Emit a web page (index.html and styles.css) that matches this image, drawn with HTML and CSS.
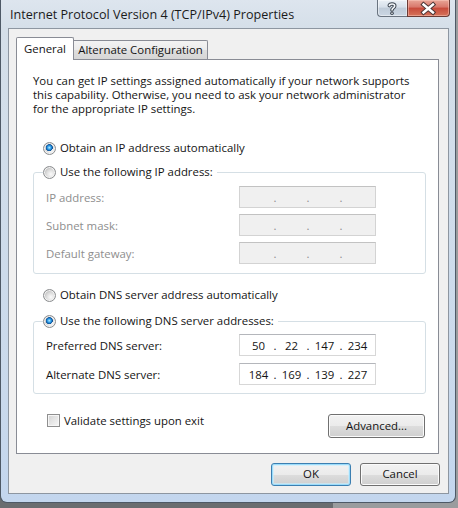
FILE: index.html
```html
<!DOCTYPE html>
<html>
<head>
<meta charset="utf-8">
<title>Internet Protocol Version 4 (TCP/IPv4) Properties</title>
<link rel="stylesheet" href="styles.css">
</head>
<body>
<div class="window">
  <div class="titlebar">
    <span class="title">Internet Protocol Version 4 (TCP/IPv4) Properties</span>
    <div class="caption">
      <div class="cap help">
        <svg width="30" height="17" viewBox="0 0 30 17">
          <g fill="none" stroke-linecap="round" stroke-linejoin="round">
            <path d="M12.3 5.6 C12.3 3.6 17.7 3.4 17.7 5.9 C17.7 7.8 15 7.9 15 9.9" stroke="#3d4651" stroke-width="3.6"/>
            <path d="M12.3 5.6 C12.3 3.6 17.7 3.4 17.7 5.9 C17.7 7.8 15 7.9 15 9.9" stroke="#f4f7fa" stroke-width="1.6"/>
            <path d="M15 13.2 L15 13.3" stroke="#3d4651" stroke-width="3.6"/>
            <path d="M15 13.2 L15 13.3" stroke="#f4f7fa" stroke-width="1.6"/>
          </g>
        </svg>
      </div>
      <div class="cap close">
        <svg width="43" height="17" viewBox="0 0 43 17">
          <g fill="none" stroke-linecap="square">
            <path d="M16.5 4.5 L26 12.5 M26 4.5 L16.5 12.5" stroke="#4a3434" stroke-width="4.4"/>
            <path d="M16.5 4.5 L26 12.5 M26 4.5 L16.5 12.5" stroke="#ffffff" stroke-width="2.4"/>
          </g>
        </svg>
      </div>
    </div>
  </div>
  <div class="client">
    <div class="tabs">
      <div class="tab active">General</div>
      <div class="tab">Alternate Configuration</div>
    </div>
    <div class="panel">
      <p class="intro">You can get IP settings assigned automatically if your network supports<br>this capability. Otherwise, you need to ask your network administrator<br>for the appropriate IP settings.</p>

      <div class="opt first"><span class="radio on"></span><span>Obtain an IP address automatically</span></div>

      <div class="group ipgroup">
        <div class="group-head"><span class="radio"></span><span>Use the following IP address:</span></div>
        <div class="rows gap6">
          <div class="row disabled"><span class="lbl">IP address:</span>
            <div class="ipbox"><span class="oct"></span><span class="dot">.</span><span class="oct"></span><span class="dot">.</span><span class="oct"></span><span class="dot">.</span><span class="oct"></span></div>
          </div>
          <div class="row disabled"><span class="lbl">Subnet mask:</span>
            <div class="ipbox"><span class="oct"></span><span class="dot">.</span><span class="oct"></span><span class="dot">.</span><span class="oct"></span><span class="dot">.</span><span class="oct"></span></div>
          </div>
          <div class="row disabled"><span class="lbl">Default gateway:</span>
            <div class="ipbox"><span class="oct"></span><span class="dot">.</span><span class="oct"></span><span class="dot">.</span><span class="oct"></span><span class="dot">.</span><span class="oct"></span></div>
          </div>
        </div>
      </div>

      <div class="opt dnsauto"><span class="radio"></span><span>Obtain DNS server address automatically</span></div>

      <div class="group dnsgroup">
        <div class="group-head"><span class="radio on"></span><span>Use the following DNS server addresses:</span></div>
        <div class="rows gap7 dnsrows">
          <div class="row"><span class="lbl">Preferred DNS server:</span>
            <div class="ipbox"><span class="oct">50</span><span class="dot">.</span><span class="oct">22</span><span class="dot">.</span><span class="oct">147</span><span class="dot">.</span><span class="oct">234</span></div>
          </div>
          <div class="row"><span class="lbl">Alternate DNS server:</span>
            <div class="ipbox"><span class="oct">184</span><span class="dot">.</span><span class="oct">169</span><span class="dot">.</span><span class="oct">139</span><span class="dot">.</span><span class="oct">227</span></div>
          </div>
        </div>
      </div>

      <div class="bottom-row">
        <label class="check"><span class="checkbox"></span><span>Validate settings upon exit</span></label>
        <div class="btn advanced">Advanced...</div>
      </div>
    </div>
    <div class="dlg-btns">
      <div class="btn default">OK</div>
      <div class="btn">Cancel</div>
    </div>
  </div>
</div>
</body>
</html>
```
FILE: styles.css
```css
* { box-sizing: border-box; }
html, body { margin: 0; padding: 0; }
body {
  width: 458px;
  height: 508px;
  overflow: hidden;
  background: linear-gradient(90deg, #6a6d70 0, #6a6d70 333px, #9a9c9e 333px);
  font-family: "Open Sans", "Segoe UI", sans-serif;
  font-size: 11.4px;
  color: #141414;
}
.window {
  width: 456px;
  height: 503px;
  border: 1px solid #4e5966;
  border-top: none;
  border-radius: 0 0 7px 7px;
  background: linear-gradient(180deg, #dde5ee 0, #d5dfe9 28px, #c9d9ec 400px, #c3d6ee 100%);
  padding: 0 6px 8px 7px;
  display: flex;
  flex-direction: column;
}
.titlebar {
  height: 28px;
  display: flex;
  align-items: flex-start;
}
.title {
  padding: 6px 0 0 2px;
  font-size: 12.6px;
  line-height: 18px;
  color: #1b1b1b;
  white-space: nowrap;
}
.caption {
  margin-left: auto;
  margin-right: -1px;
  display: flex;
}
.cap {
  height: 17px;
  border: 1px solid #6a7480;
  border-top: none;
}
.cap svg { display: block; margin: 0 -1px; }
.help {
  width: 30px;
  border-right: none;
  border-radius: 0 0 0 4px;
  background: linear-gradient(180deg, #eaf0f6 0, #d6dfe9 45%, #bfcbd8 50%, #cbd6e3 100%);
  box-shadow: inset 0 0 0 1px rgba(255,255,255,0.45);
}
.close {
  width: 43px;
  border-color: #6b3b35;
  border-radius: 0 0 4px 0;
  background: linear-gradient(180deg, #e8a697 0, #d8776a 45%, #c74a3a 50%, #d6735a 100%);
  box-shadow: inset 0 0 0 1px rgba(255,210,200,0.45);
}

.client {
  height: 466px;
  border: 1px solid #8d96a1;
  background: #f0f0f0;
  display: flex;
  flex-direction: column;
}
.tabs {
  display: flex;
  align-items: flex-end;
  height: 22px;
  margin: 8px 0 0 7px;
}
.tab {
  border: 1px solid #898c95;
  border-bottom: none;
  text-align: center;
  white-space: nowrap;
  line-height: 16px;
  color: #141414;
}
.tab.active {
  width: 58px;
  height: 23px;
  margin-bottom: -1px;
  padding-top: 3px;
  background: #ffffff;
  border-radius: 2px 2px 0 0;
  position: relative;
  z-index: 1;
}
.tab:not(.active) {
  width: 134px;
  height: 19px;
  padding-top: 1px;
  border-left: none;
  background: linear-gradient(180deg, #f3f3f3 0, #ebebeb 50%, #dedede 51%, #d6d6d6 100%);
  border-radius: 0 2px 0 0;
}
.panel {
  width: 423px;
  height: 395px;
  margin-left: 7px;
  border: 1px solid #898c95;
  background: #ffffff;
  display: flex;
  flex-direction: column;
}
.intro {
  margin: 14px 0 0 16px;
  line-height: 14px;
  white-space: nowrap;
}
.opt {
  display: flex;
  align-items: center;
  gap: 4px;
  height: 14px;
  line-height: 14px;
  padding-left: 26px;
  white-space: nowrap;
}
.opt.first { margin-top: 25px; }
.opt.dnsauto { margin-top: 14px; }

.radio {
  flex: none;
  width: 13px;
  height: 13px;
  border-radius: 50%;
  border: 1px solid #8b8d8f;
  background: radial-gradient(circle at 62% 65%, #fbfbfb 0, #eaeaea 2.5px, #d6d6d6 5px, #c8c8c8 6px);
  box-shadow: inset 0 0 0 1px #f3f3f3;
}
.radio.on {
  background:
    radial-gradient(circle at 48% 42%, #bdeaff 0, #54b8f2 1.2px, #1a7fd0 2.4px, #0b4c8e 3.3px, rgba(11,76,142,0) 3.7px),
    radial-gradient(circle at 62% 65%, #fbfbfb 0, #eaeaea 2.5px, #d6d6d6 5px, #c8c8c8 6px);
}

.group {
  width: 393px;
  margin-left: 16px;
  border: 1px solid #d5dfe5;
  border-radius: 3px;
}
.ipgroup { margin-top: 17px; padding-bottom: 9px; }
.dnsgroup { margin-top: 19px; padding-bottom: 8px; }
.group-head {
  display: flex;
  align-items: center;
  gap: 4px;
  width: max-content;
  height: 14px;
  line-height: 14px;
  margin: -8px 0 0 9px;
  padding-right: 4px;
  background: #ffffff;
  white-space: nowrap;
}
.rows {
  display: flex;
  flex-direction: column;
  padding-left: 12px;
  margin-top: 7px;
}
.rows.dnsrows { margin-top: 6px; }
.gap6 { gap: 6px; }
.gap7 { gap: 7px; }
.row {
  display: flex;
  align-items: center;
  height: 22px;
}
.lbl {
  width: 193px;
  white-space: nowrap;
}
.ipbox {
  width: 137px;
  height: 22px;
  border: 1px solid #d7d7d7;
  border-top-color: #b4b6bb;
  background: #ffffff;
  display: flex;
  align-items: center;
  padding-left: 4px;
  line-height: 16px;
  padding-top: 1px;
}
.oct { width: 29px; text-align: center; }
.dot { width: 4px; text-align: center; }
.row.disabled { color: #8e8e8e; }
.row.disabled .ipbox {
  background: #f0f0f0;
  border-color: #d3d3d3;
  border-top-color: #c2c2c2;
}

.bottom-row {
  display: flex;
  justify-content: space-between;
  align-items: flex-start;
  margin-top: 20px;
  padding: 0 13px 0 30px;
}
.check {
  display: flex;
  align-items: center;
  gap: 4px;
  height: 13px;
  line-height: 13px;
  white-space: nowrap;
}
.checkbox {
  width: 13px;
  height: 13px;
  border: 1px solid #8f8f8f;
  background: linear-gradient(135deg, #d2d2d2 0, #e6e6e6 50%, #f7f7f7 100%);
  box-shadow: inset 0 0 0 1px #f6f6f6;
}

.btn {
  height: 23px;
  width: 80px;
  border: 1px solid #707070;
  border-radius: 3px;
  background: linear-gradient(180deg, #f2f2f2 0, #ebebeb 50%, #dddddd 51%, #cfcfcf 100%);
  box-shadow: inset 0 0 0 1px #fbfbfb;
  text-align: center;
  line-height: 20px;
  color: #141414;
  white-space: nowrap;
}
.btn.advanced { width: 97px; height: 24px; line-height: 21px; }
.btn.default {
  border-color: #3c7fb1;
  box-shadow: inset 0 0 0 1px #9bdcfb, inset 0 0 0 2px rgba(200,238,255,0.6);
}
.dlg-btns {
  display: flex;
  justify-content: flex-end;
  gap: 9px;
  margin-top: 9px;
  padding-right: 8px;
}
```
